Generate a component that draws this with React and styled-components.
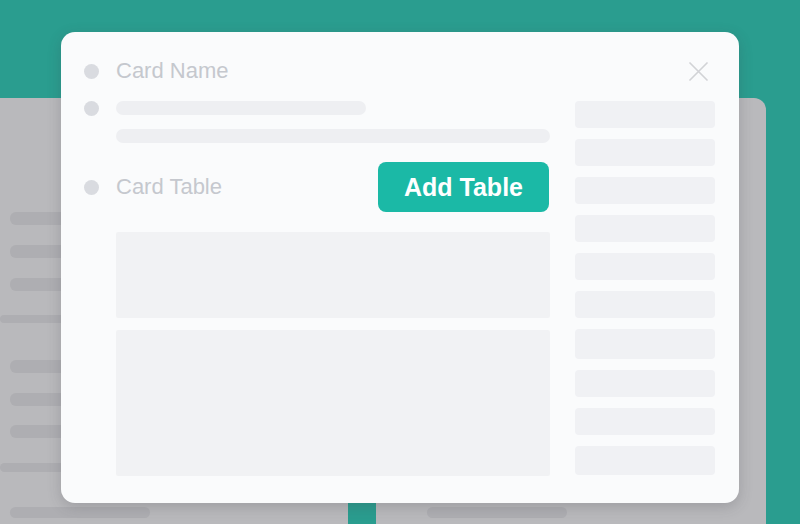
import styled, { createGlobalStyle } from 'styled-components';

const GlobalStyle = createGlobalStyle`
  html, body {
    margin: 0;
    padding: 0;
    background: #2a9d8f;
    font-family: 'Liberation Sans', Arial, sans-serif;
    overflow: hidden;
  }
`;

const Scene = styled.div`
  position: relative;
  width: 800px;
  height: 524px;
  padding-top: 98px;
  box-sizing: border-box;
  background: #2a9d8f;
  overflow: hidden;
`;

const Backdrop = styled.div`
  display: flex;
  gap: 28px;
  width: 766px;
  height: 426px;
`;

const Pane = styled.div`
  display: flex;
  flex-direction: column;
  width: ${(p) => p.$width}px;
  background: #b9b9bc;
  border-top-right-radius: ${(p) => (p.$rounded ? '12px' : '0')};
`;

const Stripe = styled.div`
  margin-top: ${(p) => p.$mt}px;
  margin-left: ${(p) => (p.$wide ? 0 : p.$ml ?? 10)}px;
  width: ${(p) => (p.$wide ? 200 : p.$w || 120)}px;
  height: ${(p) => p.$h}px;
  border-radius: 6px;
  background: #aeaeb2;
`;

const Modal = styled.div`
  position: absolute;
  left: 61px;
  top: 32px;
  width: 678px;
  height: 471px;
  box-sizing: border-box;
  padding: 27px 24px 0 23px;
  border-radius: 14px;
  background: #fafbfc;
  box-shadow: 0 4px 14px rgba(60, 60, 70, 0.22);
`;

const Header = styled.div`
  display: flex;
  align-items: center;
  height: 24px;
`;

const Dot = styled.span`
  flex: none;
  width: 15px;
  height: 15px;
  margin-right: 17px;
  border-radius: 50%;
  background: #d9dbe0;
`;

const Title = styled.span`
  font-size: 22px;
  line-height: 24px;
  color: #c5c8ce;
`;

const CloseBtn = styled.button`
  display: flex;
  align-items: center;
  justify-content: center;
  margin-left: auto;
  margin-right: 4px;
  width: 26px;
  height: 26px;
  padding: 0;
  border: none;
  background: none;
  cursor: pointer;
`;

const Body = styled.div`
  display: flex;
  gap: 25px;
  margin-top: 18px;
`;

const Main = styled.div`
  display: flex;
  flex-direction: column;
  width: 466px;
`;

const Row = styled.div`
  display: flex;
  align-items: center;
  height: ${(p) => p.$h}px;
  margin-top: ${(p) => p.$mt || 0}px;
`;

const Skeleton = styled.div`
  width: ${(p) => p.$w}px;
  height: 14px;
  margin-top: ${(p) => p.$mt || 0}px;
  margin-left: ${(p) => (p.$indent ? 32 : 0)}px;
  border-radius: 7px;
  background: #eeeff2;
`;

const AddButton = styled.button`
  margin-left: auto;
  margin-right: 1px;
  width: 171px;
  height: 50px;
  border: none;
  border-radius: 8px;
  background: #1bb9a6;
  color: #ffffff;
  font-family: 'Liberation Sans', Arial, sans-serif;
  font-size: 25px;
  font-weight: 700;
  cursor: pointer;
`;

const Block = styled.div`
  margin-top: ${(p) => p.$mt}px;
  margin-left: 32px;
  width: 434px;
  height: ${(p) => p.$h}px;
  border-radius: 2px;
  background: #f1f2f4;
`;

const Side = styled.div`
  display: flex;
  flex-direction: column;
  gap: 11px;
  width: 140px;
`;

const SideBar = styled.div`
  height: ${(p) => p.$h}px;
  border-radius: 4px;
  background: #f0f1f4;
`;

const stripes = [
  { mt: 114, h: 13 },
  { mt: 20, h: 13 },
  { mt: 20, h: 13 },
  { mt: 24, h: 8, wide: true },
  { mt: 37, h: 13 },
  { mt: 20, h: 13 },
  { mt: 19, h: 13 },
  { mt: 25, h: 9, wide: true },
  { mt: 35, h: 11, w: 140 },
];

const sideBars = [27, 27, 27, 27, 27, 27, 30, 27, 27, 29];

function CloseIcon() {
  return (
    <svg width="19" height="19" viewBox="0 0 19 19" fill="none">
      <path d="M1 1L18 18M18 1L1 18" stroke="#d2d3d6" strokeWidth="1.7" strokeLinecap="round" />
    </svg>
  );
}

export default function App() {
  return (
    <>
      <GlobalStyle />
      <Scene>
        <Backdrop>
          <Pane $width={348}>
            {stripes.map((s, i) => (
              <Stripe key={i} $mt={s.mt} $h={s.h} $w={s.w} $wide={s.wide} />
            ))}
          </Pane>
          <Pane $width={390} $rounded>
            <Stripe $mt={409} $h={11} $w={140} $ml={51} />
          </Pane>
        </Backdrop>

        <Modal>
          <Header>
            <Dot />
            <Title>Card Name</Title>
            <CloseBtn aria-label="Close">
              <CloseIcon />
            </CloseBtn>
          </Header>

          <Body>
            <Main>
              <Row $h={14}>
                <Dot />
                <Skeleton $w={250} />
              </Row>
              <Skeleton $w={434} $mt={14} $indent />
              <Row $h={50} $mt={19}>
                <Dot />
                <Title>Card Table</Title>
                <AddButton>Add Table</AddButton>
              </Row>
              <Block $mt={20} $h={86} />
              <Block $mt={12} $h={146} />
            </Main>
            <Side>
              {sideBars.map((h, i) => (
                <SideBar key={i} $h={h} />
              ))}
            </Side>
          </Body>
        </Modal>
      </Scene>
    </>
  );
}
